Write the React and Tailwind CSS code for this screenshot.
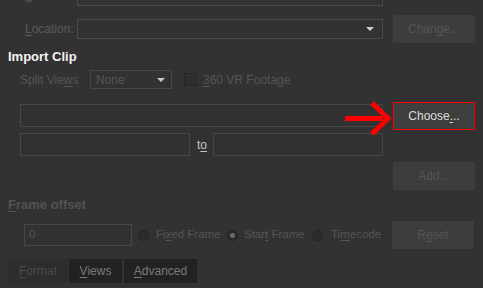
import React from "react";

const U = ({ children }) => (
  <span className="underline underline-offset-[2px] decoration-1">{children}</span>
);

function Radio({ checked }) {
  return (
    <div className="w-[11px] h-[11px] rounded-full bg-[#2c2c2c] border border-[#232323] flex items-center justify-center shrink-0">
      {checked ? <div className="w-[5px] h-[5px] rounded-full bg-[#6a6a6a]" /> : null}
    </div>
  );
}

function Btn({ children, active }) {
  return (
    <div
      className={
        "w-[82px] h-[28px] flex items-center justify-center text-[12px] " +
        (active
          ? "bg-[#3e3e3e] border border-[#ff0000] text-[#dcdcdc]"
          : "bg-[#3d3d3d] text-[#555555]")
      }
    >
      {children}
    </div>
  );
}

function Arrow() {
  return (
    <div className="absolute left-[340px] top-[100px] w-[54px] h-[38px] pointer-events-none">
      <svg width="54" height="38" viewBox="0 0 54 38">
        <rect x="5" y="16" width="38" height="5" fill="#ff0000" />
        <polyline
          points="32,3 48,18.5 32,34"
          fill="none"
          stroke="#ff0000"
          strokeWidth="5"
          strokeLinejoin="miter"
        />
      </svg>
    </div>
  );
}

export default function App() {
  return (
    <div
      className="relative w-[483px] h-[288px] overflow-hidden bg-[#323232] text-[12px] leading-none"
      style={{ fontFamily: '"Liberation Sans", Arial, sans-serif' }}
    >
      {/* top cut-off row */}
      <div className="flex h-[6px]">
        <div className="ml-[25px] w-[7px] h-[2px] bg-[#4a4a4a]" />
        <div className="ml-[45px] w-[306px] h-[6px] border-x border-b border-[#4a4a4a]" />
      </div>

      {/* Location row */}
      <div className="flex items-center h-[28px] mt-[9px]">
        <div className="ml-[25px] w-[52px] text-[#5a5a5a]">
          <U>L</U>ocation:
        </div>
        <div className="w-[306px] h-[20px] border border-[#4a4a4a] flex items-center justify-end pr-[8px]">
          <div className="w-0 h-0 border-l-[4px] border-r-[4px] border-t-[4px] border-l-transparent border-r-transparent border-t-[#d0d0d0]" />
        </div>
        <div className="ml-[10px]">
          <Btn>
            Chan<U>g</U>e...
          </Btn>
        </div>
      </div>

      {/* Import Clip */}
      <div className="mt-[6px] h-[16px] leading-[16px] ml-[8px] text-[13px] font-bold text-[#f2f2f2]">
        Import Clip
      </div>

      {/* Split views row */}
      <div className="flex items-center h-[19px] mt-[5px]">
        <div className="ml-[20px] w-[70px] text-[#555555]">
          Split Vie<U>w</U>s
        </div>
        <div className="w-[82px] h-[19px] border border-[#474747] flex items-center pl-[5px] pr-[6px] justify-between text-[#555555]">
          <span>None</span>
          <div className="w-0 h-0 border-l-[4px] border-r-[4px] border-t-[4px] border-l-transparent border-r-transparent border-t-[#cccccc]" />
        </div>
        <div className="ml-[12px] w-[13px] h-[13px] border border-[#262626] bg-[#2e2e2e]" />
        <div className="ml-[6px] text-[#555555]">
          <U>3</U>60 VR Footage
        </div>
      </div>

      {/* Choose row */}
      <div className="flex items-start h-[28px] mt-[13px]">
        <div className="ml-[20px] mt-[2px] w-[363px] h-[23px] border border-[#474747]" />
        <div className="ml-[10px]">
          <Btn active>
            Choose<U>.</U>..
          </Btn>
        </div>
      </div>

      {/* to row */}
      <div className="flex items-center h-[23px] mt-[3px]">
        <div className="ml-[20px] w-[170px] h-[23px] border border-[#474747]" />
        <div className="ml-[7px] w-[16px] text-[#c4c4c4]">
          t<U>o</U>
        </div>
        <div className="w-[170px] h-[23px] border border-[#474747]" />
      </div>

      {/* Add row */}
      <div className="flex h-[28px] mt-[6px]">
        <div className="ml-[393px]">
          <Btn>Add...</Btn>
        </div>
      </div>

      {/* Frame offset label */}
      <div className="mt-[7px] h-[16px] leading-[16px] ml-[8px] text-[13px] font-bold text-[#525252]">
        <U>F</U>rame offset
      </div>

      {/* Frame offset row */}
      <div className="flex items-center h-[28px] mt-[8px] text-[11.5px] text-[#555555]">
        <div className="ml-[24px] w-[108px] h-[22px] border border-[#474747] flex items-center pl-[4px]">
          0
        </div>
        <div className="ml-[6px]">
          <Radio />
        </div>
        <div className="ml-[7px] w-[71px]">
          Fi<U>x</U>ed Frame
        </div>
        <Radio checked />
        <div className="ml-[6px] w-[68px]">
          Star<U>t</U> Frame
        </div>
        <Radio />
        <div className="ml-[8px] w-[61px]">
          Ti<U>m</U>ecode
        </div>
        <Btn>
          R<U>e</U>set
        </Btn>
      </div>

      {/* Tabs */}
      <div className="flex h-[24px] mt-[10px] ml-[8px] text-[12px]">
        <div className="w-[60px] bg-[#2d2d2d] flex items-center justify-center text-[#4a4a4a]">
          <span>
            <U>F</U>ormat
          </span>
        </div>
        <div className="ml-[1px] w-[53px] bg-[#222222] flex items-center justify-center text-[#7a7a7a]">
          <span>
            <U>V</U>iews
          </span>
        </div>
        <div className="ml-[2px] w-[73px] bg-[#222222] flex items-center justify-center text-[#7a7a7a]">
          <span>
            <U>A</U>dvanced
          </span>
        </div>
      </div>

      <Arrow />
    </div>
  );
}
